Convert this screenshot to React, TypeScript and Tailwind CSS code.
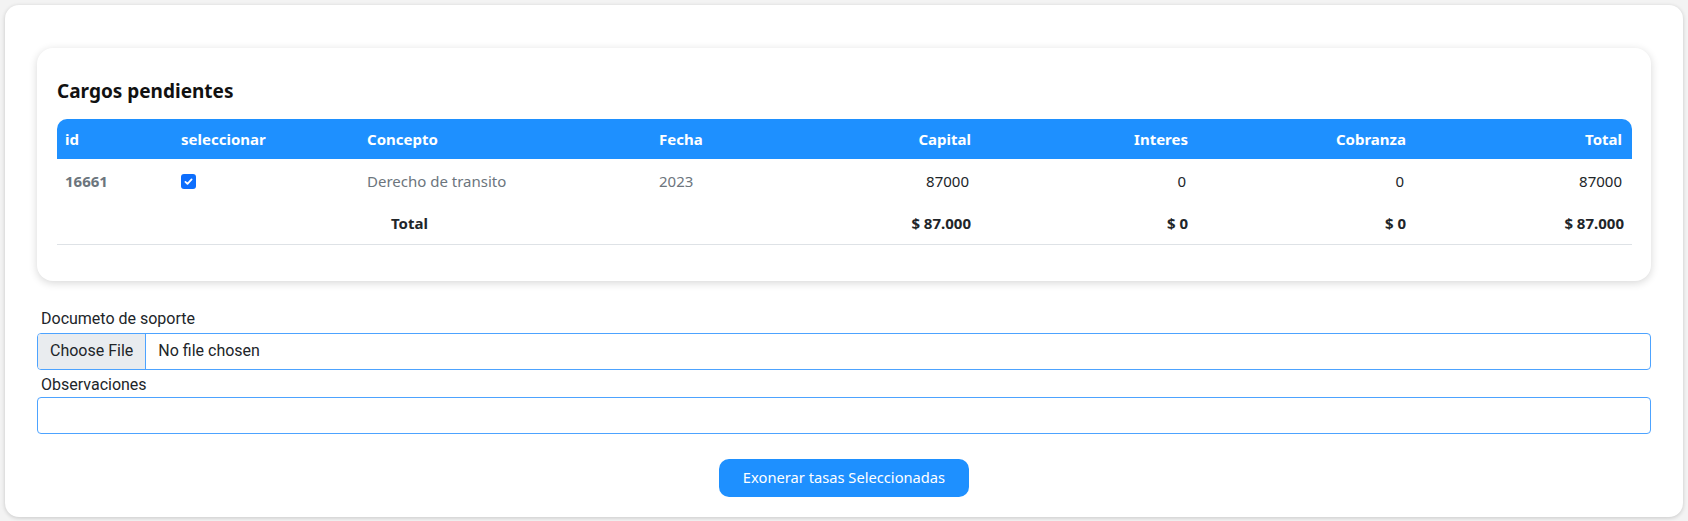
import React from 'react';

// Cargos pendientes + formulario de exoneración
const SEGOE = "font-['Noto_Sans','Open_Sans',sans-serif]";
const ROBOTO = "font-['Roboto','Liberation_Sans',sans-serif]";

interface Cargo {
  id: number;
  concepto: string;
  fecha: string;
  capital: number;
  interes: number;
  cobranza: number;
  total: number;
}

const CARGOS: Cargo[] = [
  { id: 16661, concepto: 'Derecho de transito', fecha: '2023', capital: 87000, interes: 0, cobranza: 0, total: 87000 },
];

const money = (n: number) => '$ ' + n.toLocaleString('es-CO');

function CargosTable() {
  const sum = (k: keyof Cargo) => CARGOS.reduce((acc, c) => acc + Number(c[k]), 0);
  return (
    <table className={`w-full table-fixed border-collapse text-[15px] ${SEGOE}`}>
      <colgroup>
        <col className="w-[116px]" />
        <col className="w-[186px]" />
        <col className="w-[292px]" />
        <col className="w-[110px]" />
        <col className="w-[218px]" />
        <col className="w-[217px]" />
        <col className="w-[218px]" />
        <col className="w-[218px]" />
      </colgroup>
      <thead>
        <tr className="h-[40px] bg-[#1e90ff] text-white font-bold">
          <th className="rounded-tl-[10px] px-2 text-left">id</th>
          <th className="px-2 text-left">seleccionar</th>
          <th className="px-2 text-left">Concepto</th>
          <th className="px-2 text-left">Fecha</th>
          <th className="px-2 text-right">Capital</th>
          <th className="px-2 text-right">Interes</th>
          <th className="px-2 text-right">Cobranza</th>
          <th className="rounded-tr-[10px] px-2 pr-[10px] text-right">Total</th>
        </tr>
      </thead>
      <tbody>
        {CARGOS.map((c) => (
          <tr key={c.id} className="h-[44px]">
            <td className="px-2 font-bold text-[#6c757d]">{c.id}</td>
            <td className="px-2">
              <span className="flex h-[15px] w-[15px] items-center justify-center rounded-[3px] bg-[#0d6efd]">
                <svg viewBox="0 0 16 16" className="h-[11px] w-[11px]" fill="none" stroke="white" strokeWidth="2.6" strokeLinecap="round" strokeLinejoin="round">
                  <path d="M3.5 8.5l3 3 6-6.5" />
                </svg>
              </span>
            </td>
            <td className="px-2 text-[#6c757d]">{c.concepto}</td>
            <td className="px-2 text-[#6c757d]">{c.fecha}</td>
            <td className="px-2 pr-[10px] text-right text-[#212529]">{c.capital}</td>
            <td className="px-2 pr-[10px] text-right text-[#212529]">{c.interes}</td>
            <td className="px-2 pr-[10px] text-right text-[#212529]">{c.cobranza}</td>
            <td className="px-2 pr-[10px] text-right text-[#212529]">{c.total}</td>
          </tr>
        ))}
        <tr className="h-[41px] border-b border-[#dee2e6] font-bold text-[#212529]">
          <td />
          <td />
          <td className="pl-[32px] text-left">Total</td>
          <td />
          <td className="px-2 text-right">{money(sum('capital'))}</td>
          <td className="px-2 text-right">{money(sum('interes'))}</td>
          <td className="px-2 text-right">{money(sum('cobranza'))}</td>
          <td className="px-2 text-right">{money(sum('total'))}</td>
        </tr>
      </tbody>
    </table>
  );
}

export default function App() {
  return (
    <div className="min-h-screen bg-[#f3f3f3] p-[5px]">
      <div className="rounded-[14px] bg-white px-8 pb-5 pt-[43px] shadow-[0_1px_4px_rgba(0,0,0,0.18)]">
        <section className="rounded-[16px] bg-white px-5 pb-[36px] pt-[29px] shadow-[0_2px_8px_rgba(0,0,0,0.16)]">
          <h3 className={`mb-[14px] text-[19px] font-bold leading-[28px] text-[#111] ${SEGOE}`}>Cargos pendientes</h3>
          <CargosTable />
        </section>

        <div className={`mt-[26px] text-[16px] text-[#212529] ${ROBOTO}`}>
          <label className="block pl-1 leading-[24px]">Documeto de soporte</label>
          <div className="mt-[2px] flex h-[37px] overflow-hidden rounded-[4px] border border-[#4da3ff]">
            <span className="flex items-center border-r border-[#4da3ff] bg-[#e9ecef] px-3">Choose File</span>
            <span className="flex items-center px-3">No file chosen</span>
          </div>
          <label className="mt-[3px] block pl-1 leading-[24px]">Observaciones</label>
          <div className="h-[37px] rounded-[4px] border border-[#4da3ff]" />
        </div>

        <div className="mt-[25px] flex justify-center">
          <button className={`h-[38px] w-[250px] rounded-[10px] bg-[#1e90ff] text-[14.7px] text-white ${SEGOE}`}>
            Exonerar tasas Seleccionadas
          </button>
        </div>
      </div>
    </div>
  );
}
